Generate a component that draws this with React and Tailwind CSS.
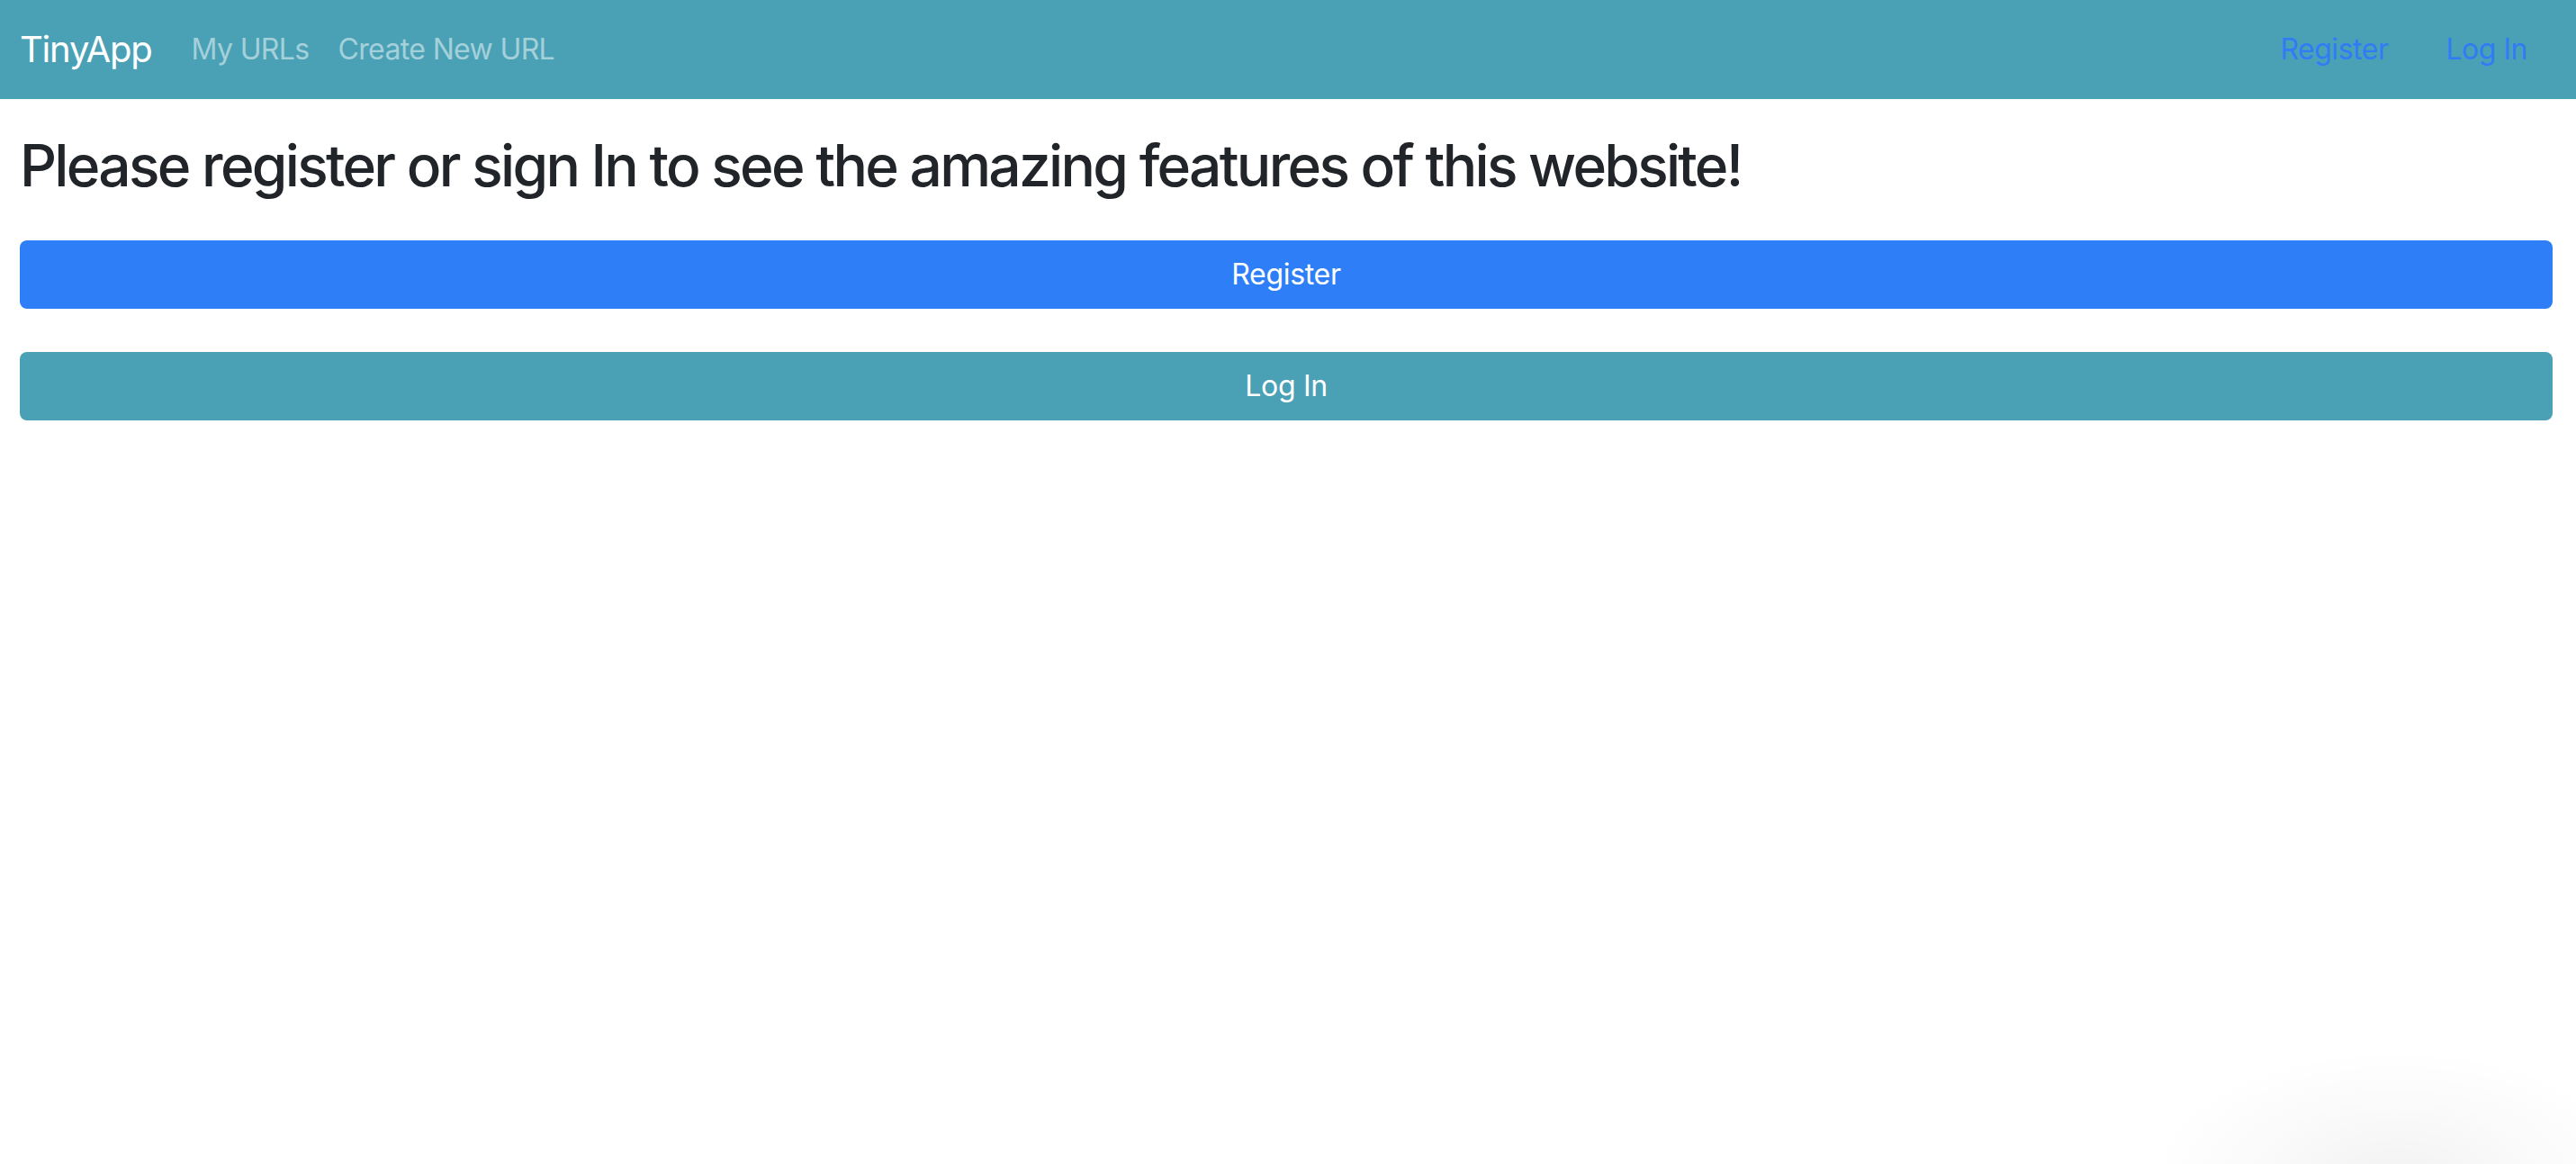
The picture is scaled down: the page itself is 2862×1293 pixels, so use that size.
import React from 'react';

export default function App() {
    return (
        <div className="relative min-h-[1293px] bg-white font-['Inter','Liberation_Sans',sans-serif] text-[#212529] overflow-hidden">
            {/* Navbar */}
            <nav className="flex h-[110px] items-center bg-[#4aa1b5] pl-[22px]">
                <a className="text-[40px] leading-none tracking-[-0.03em] text-white mr-[44px]">TinyApp</a>
                <a className="text-[32px] leading-none tracking-[-0.02em] text-[#a4d0da] mr-[32px]">My URLs</a>
                <a className="text-[32px] leading-none tracking-[-0.02em] text-[#a4d0da]">Create New URL</a>
                <div className="ml-auto flex items-center gap-[64px] pr-[54px]">
                    <a className="text-[32px] leading-none tracking-[-0.015em] text-[#2f7cf6]">Register</a>
                    <a className="text-[32px] leading-none tracking-[-0.015em] text-[#2f7cf6]">Log In</a>
                </div>
            </nav>

            {/* Main */}
            <main className="pl-[22px] pr-[26px]">
                <h2 className="mt-[36px] text-[64px] leading-[1.2] font-medium tracking-[-0.042em]">
                    Please register or sign In to see the amazing features of this website!
                </h2>
                <button className="mt-[44px] block w-full h-[76px] rounded-[8px] bg-[#2e7ff7] text-[32px] tracking-[-0.01em] text-white">
                    Register
                </button>
                <button className="mt-[48px] block w-full h-[76px] rounded-[8px] bg-[#4aa1b5] text-[32px] tracking-[-0.01em] text-white">
                    Log In
                </button>
            </main>

            {/* faint corner shadow */}
            <div className="pointer-events-none absolute -bottom-[170px] -right-[80px] h-[300px] w-[560px] rounded-full bg-[radial-gradient(ellipse_at_center,rgba(0,0,0,0.05),rgba(0,0,0,0.015)_45%,rgba(0,0,0,0)_70%)]"></div>
        </div>
    );
}
